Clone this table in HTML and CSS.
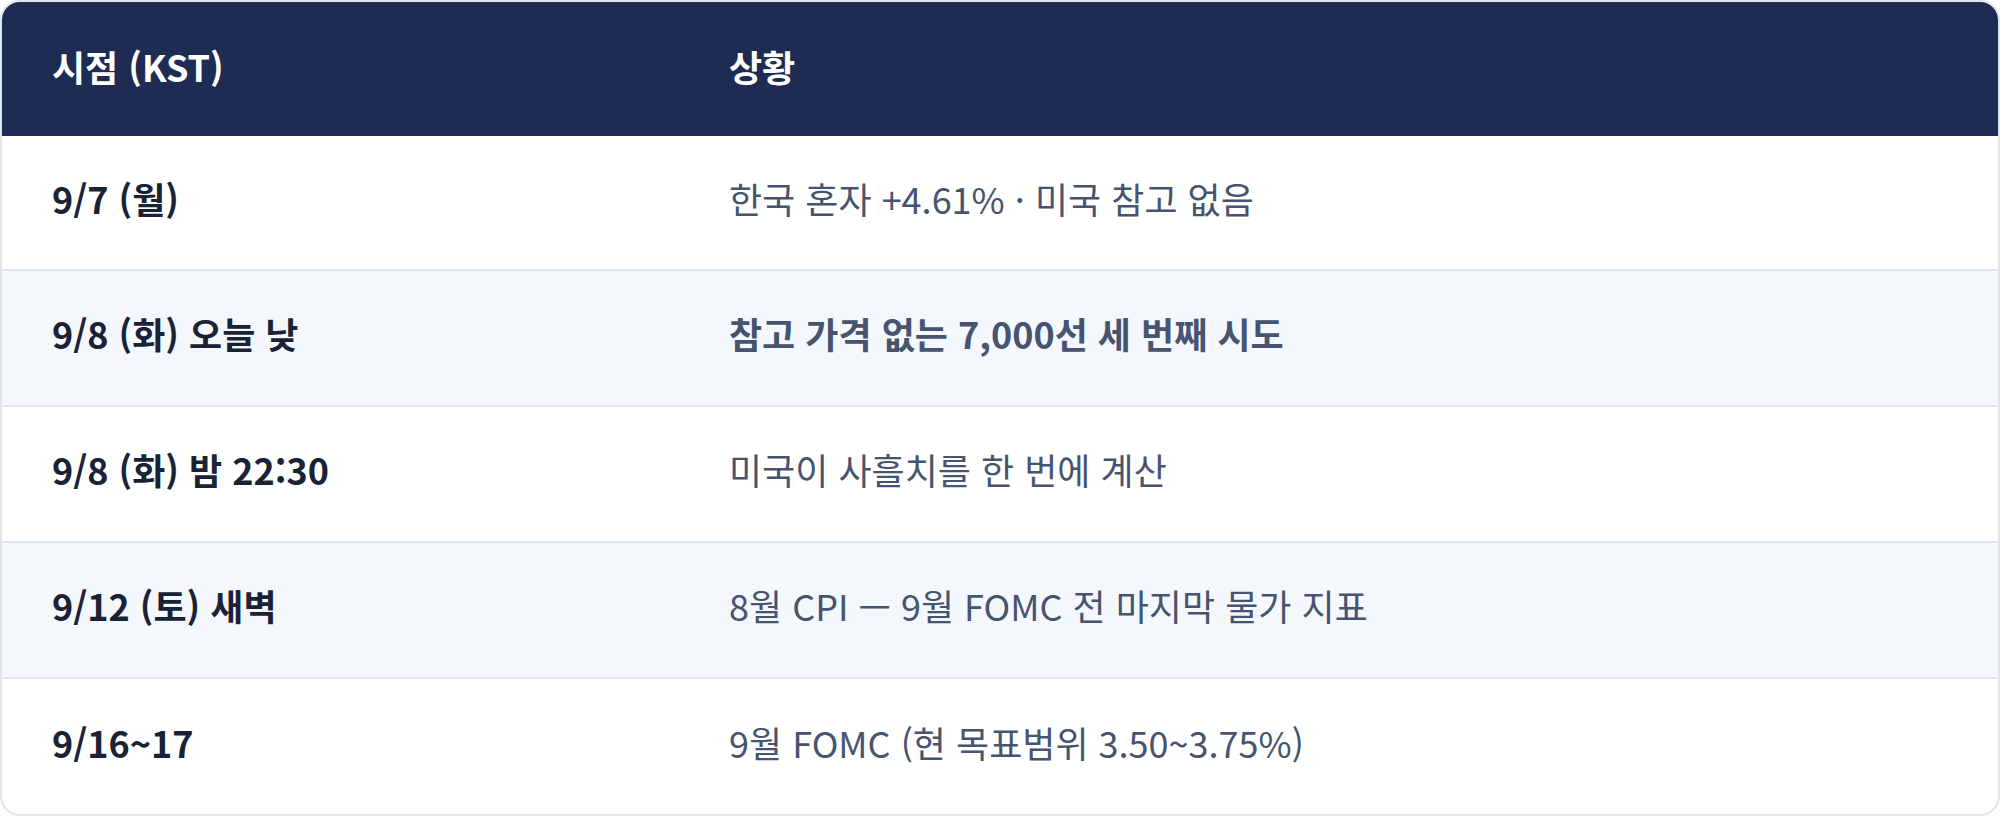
FILE: index.html
```html
<!DOCTYPE html>
<html lang="ko">
<head>
<meta charset="utf-8">
<link rel="stylesheet" href="styles.css">
</head>
<body>
<div class="card">
  <table class="schedule">
    <colgroup><col class="col-time"><col class="col-desc"></colgroup>
    <thead>
      <tr><th>시점 (KST)</th><th>상황</th></tr>
    </thead>
    <tbody>
      <tr><td class="time">9/7 (월)</td><td class="desc">한국 혼자 +4.61% · 미국 참고 없음</td></tr>
      <tr class="alt"><td class="time">9/8 (화) 오늘 낮</td><td class="desc strong">참고 가격 없는 7,000선 세 번째 시도</td></tr>
      <tr><td class="time">9/8 (화) 밤 22:30</td><td class="desc">미국이 사흘치를 한 번에 계산</td></tr>
      <tr class="alt"><td class="time">9/12 (토) 새벽</td><td class="desc">8월 CPI — 9월 FOMC 전 마지막 물가 지표</td></tr>
      <tr><td class="time">9/16~17</td><td class="desc">9월 FOMC (현 목표범위 3.50~3.75%)</td></tr>
    </tbody>
  </table>
</div>
</body>
</html>
```
FILE: styles.css
```css
html, body {
  margin: 0;
  padding: 0;
  background: #ffffff;
}
body {
  font-family: "Noto Sans CJK KR", "Noto Sans", sans-serif;
}
.card {
  width: 2000px;
  height: 816px;
  box-sizing: border-box;
  border: 2px solid #dfe5f1;
  border-radius: 20px;
  overflow: hidden;
  background: #ffffff;
}
.schedule {
  width: 100%;
  border-collapse: collapse;
  table-layout: fixed;
}
.col-time { width: 677px; }
.schedule th {
  background: #1e2b52;
  color: #ffffff;
  text-align: left;
  font-weight: 700;
  font-size: 36px;
  height: 134px;
  padding: 0 50px 7px;
  box-sizing: border-box;
}
.schedule td {
  height: 136px;
  padding: 0 50px 10px;
  font-size: 36px;
  border-top: 2px solid #dfe5f1;
  box-sizing: border-box;
}
.schedule tbody tr:first-child td {
  border-top: none;
  height: 134px;
}
.schedule tr.alt td { background: #f4f7fc; }
.time {
  font-weight: 700;
  color: #1a2235;
}
.desc {
  font-weight: 400;
  color: #47546f;
}
.desc.strong { font-weight: 700; }
```
